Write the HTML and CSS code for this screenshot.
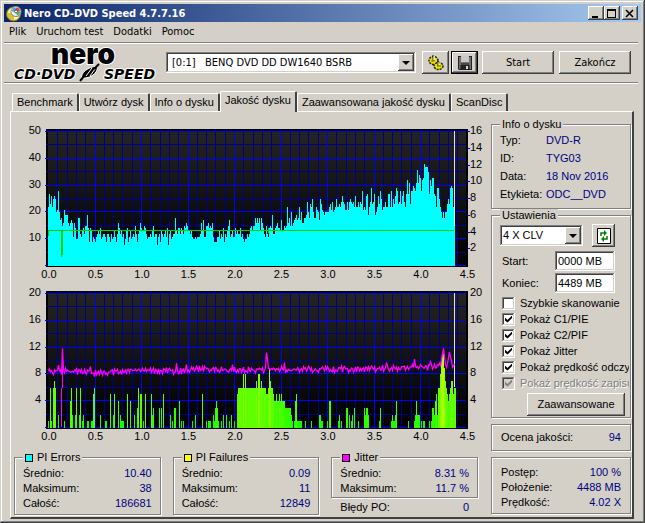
FILE: index.html
```html
<!DOCTYPE html>
<html lang="pl">
  <head>
    <meta charset="UTF-8" />
    <meta name="viewport" content="width=device-width, initial-scale=1.0" />
    <title>Nero CD-DVD Speed 4.7.7.16</title>
    <link rel="stylesheet" href="styles.css">
  </head>

  <body>
    <div class="window">
      <header class="titlebar">
        <svg class="app-icon" width="17" height="17" viewBox="0 0 17 17">
          <circle cx="7.5" cy="9" r="7" fill="#d8c038" stroke="#8a7818" />
          <path d="M2 8a6 6 0 0 1 4-5l1 5zM13 12a6 6 0 0 1-5 3l0-4z" fill="#fff3a0" />
          <circle cx="10" cy="6.5" r="5" fill="#eef2f4" stroke="#7a8a98" />
          <path d="M10 6.500V2.500a4 4 0 0 1 4 4z" fill="#e04a30" />
          <path d="M10 6.500H6a4 4 0 0 1 4-4z" fill="#5b9ad8" />
          <path d="M10 6.500l4 0a4 4 0 0 1-3 4z" fill="#58a868" />
          <circle cx="10" cy="6.500" r="1.500" fill="#fff" stroke="#456" />
        </svg>
        <h1>Nero CD-DVD Speed 4.7.7.16</h1>
        <div class="window-buttons">
          <button class="btn" aria-label="Minimalizuj"><svg width="10" height="9" viewBox="0 0 10 9"><path d="M1 7h6v2H1z" /></svg></button>
          <button class="btn" aria-label="Maksymalizuj"><svg width="10" height="9" viewBox="0 0 10 9"><path d="M0 0h9v9H0zM1 2v6h7V2z" fill-rule="evenodd" /></svg></button>
          <button class="btn close" aria-label="Zamknij"><svg width="10" height="9" viewBox="0 0 10 9"><path d="M1 1l7 7M8 1L1 8" stroke="#000" stroke-width="1.600" /></svg></button>
        </div>
      </header>

      <nav class="menu">
        <a href="#">Plik</a>
        <a href="#">Uruchom test</a>
        <a href="#">Dodatki</a>
        <a href="#">Pomoc</a>
      </nav>

      <div class="toolbar">
        <svg class="logo" width="150" height="36" viewBox="0 0 150 36">
          <text class="logo-nero" x="38" y="19">nero</text>
          <text class="logo-speed" x="1" y="34">CD·DVD</text>
          <text class="logo-speed" x="91" y="34">SPEED</text>
          <path d="M69 33c-2-5 6-11 15-12 2 4-4 13-15 12z" fill="#000" stroke="#fff" />
          <path d="M73 31l6-8M77 31l5-7" stroke="#fff" />
          <path d="M67 36l5-6M81 24l5-5" stroke="#000" stroke-width="2" />
        </svg>
        <div class="select drive">
          <select aria-label="Napęd">
            <option>[0:1]&nbsp;&nbsp; BENQ DVD DD DW1640 BSRB</option>
          </select>
          <span class="arrow"></span>
        </div>
        <div class="tools">
          <button class="btn tool" aria-label="Opcje">
            <svg width="18" height="18" viewBox="0 0 18 18">
              <ellipse cx="6.5" cy="6.5" rx="4.500" ry="4" fill="#e8e000" stroke="#222" stroke-dasharray="2 1" stroke-width="1.500" />
              <ellipse cx="11.5" cy="12" rx="4.500" ry="3.500" fill="#e8e000" stroke="#222" stroke-dasharray="2 1" stroke-width="1.500" />
              <path d="M6 1v6M11 7v5" stroke="#222" />
              <path d="M7 2v4M12 8v3" stroke="#fff" />
              <path d="M4 7h4M10 12h4" stroke="#777700" />
            </svg>
          </button>
          <button class="btn tool save" aria-label="Zapisz">
            <svg width="14" height="14" viewBox="0 0 14 14">
              <path d="M0 0h14v14H1l-1-1z" fill="#222" />
              <path d="M1 1h12v12H1z" fill="#707070" />
              <path d="M3 0h8v7H3z" fill="#c8c8c8" />
              <path d="M3 7h8M3 9h8v5H3z" fill="#222" stroke="#222" />
              <path d="M8 10h2v3H8z" fill="#d8d8d8" />
            </svg>
          </button>
        </div>
        <button class="btn wide">Start</button>
        <button class="btn wide">Zakończ</button>
      </div>

      <div class="tabs">
        <button class="tab">Benchmark</button>
        <button class="tab">Utwórz dysk</button>
        <button class="tab">Info o dysku</button>
        <button class="tab active">Jakość dysku</button>
        <button class="tab">Zaawansowana jakość dysku</button>
        <button class="tab">ScanDisc</button>
      </div>

      <main class="panel">
        <section class="results">
          <svg class="chart" id="pieChart" viewBox="0 0 472 162"></svg>
          <svg class="chart" id="pifChart" viewBox="0 0 472 162"></svg>

          <div class="stats">
            <fieldset class="group">
              <legend><i class="swatch cyan"></i>PI Errors</legend>
              <dl>
                <dt>Średnio:</dt><dd>10.40</dd>
                <dt>Maksimum:</dt><dd>38</dd>
                <dt>Całość:</dt><dd>186681</dd>
              </dl>
            </fieldset>
            <fieldset class="group">
              <legend><i class="swatch yellow"></i>PI Failures</legend>
              <dl>
                <dt>Średnio:</dt><dd>0.09</dd>
                <dt>Maksimum:</dt><dd>11</dd>
                <dt>Całość:</dt><dd>12849</dd>
              </dl>
            </fieldset>
            <div class="jitter">
              <fieldset class="group">
                <legend><i class="swatch magenta"></i>Jitter</legend>
                <dl>
                  <dt>Średnio:</dt><dd>8.31 %</dd>
                  <dt>Maksimum:</dt><dd>11.7 %</dd>
                </dl>
              </fieldset>
              <dl class="po">
                <dt>Błędy PO:</dt><dd>0</dd>
              </dl>
            </div>
          </div>
        </section>

        <aside class="side">
          <fieldset class="group info">
            <legend>Info o dysku</legend>
            <dl>
              <dt>Typ:</dt><dd>DVD-R</dd>
              <dt>ID:</dt><dd>TYG03</dd>
              <dt>Data:</dt><dd>18 Nov 2016</dd>
              <dt>Etykieta:</dt><dd>ODC__DVD</dd>
            </dl>
          </fieldset>

          <fieldset class="group settings">
            <legend>Ustawienia</legend>
            <div class="speed">
              <div class="select">
                <select aria-label="Prędkość">
                  <option>4 X CLV</option>
                </select>
                <span class="arrow"></span>
              </div>
              <button class="btn refresh" aria-label="Odśwież">
                <svg width="14" height="16" viewBox="0 0 14 16">
                  <path d="M.5.5h13v15H.5z" fill="#fff" stroke="#000" />
                  <path d="M4 8V5h4M10 8v3H6" fill="none" stroke="#008000" stroke-width="1.500" />
                  <path d="M7 2l3 3-3 3zM7 8l-3 3 3 3z" fill="#008000" />
                </svg>
              </button>
            </div>
            <div class="field">
              <label for="start">Start:</label>
              <input type="text" id="start" value="0000 MB" />
            </div>
            <div class="field">
              <label for="end">Koniec:</label>
              <input type="text" id="end" value="4489 MB" />
            </div>
            <div class="checks">
              <label><input type="checkbox" />Szybkie skanowanie</label>
              <label><input type="checkbox" checked />Pokaż C1/PIE</label>
              <label><input type="checkbox" checked />Pokaż C2/PIF</label>
              <label><input type="checkbox" checked />Pokaż Jitter</label>
              <label><input type="checkbox" checked />Pokaż prędkość odczy</label>
              <label class="off"><input type="checkbox" checked disabled />Pokaż prędkość zapisu</label>
            </div>
            <button class="btn advanced">Zaawansowane</button>
          </fieldset>

          <div class="group score">
            <dl>
              <dt>Ocena jakości:</dt><dd>94</dd>
            </dl>
          </div>

          <div class="group progress">
            <dl>
              <dt>Postęp:</dt><dd>100 %</dd>
              <dt>Położenie:</dt><dd>4488 MB</dd>
              <dt>Prędkość:</dt><dd>4.02 X</dd>
            </dl>
          </div>
        </aside>
      </main>
    </div>

    <script src="charts.js"></script>
  </body>
</html>
```

FILE: styles.css
```css
* {
  margin: 0;
  padding: 0;
  box-sizing: border-box;
}

body {
  background-color: #d4d0c8;
  color: #000;
  font-family: "Liberation Sans", Arial, sans-serif;
  font-size: 11px;
  line-height: 13px;
}

button, input, select {
  font: inherit;
  color: inherit;
}

.window {
  display: flex;
  flex-direction: column;
  min-height: 100vh;
  padding: 4px;
  box-shadow: inset -1px -1px #404040, inset 1px 1px #d4d0c8, inset -2px -2px #808080, inset 2px 2px #fff;
}

/* Title bar */
.titlebar {
  display: flex;
  align-items: center;
  height: 18px;
  padding: 0 3px 0 2px;
  background: linear-gradient(to right, #0a246a, #a6caf0);
  color: #fff;
}

.titlebar h1 {
  flex: 1;
  padding-left: 1px;
  font: bold 11px "DejaVu Sans Condensed", "DejaVu Sans", sans-serif;
}

.window-buttons {
  display: flex;
}

.window-buttons .btn {
  width: 16px;
  height: 14px;
}

.window-buttons .close {
  margin-left: 2px;
}

.btn {
  display: flex;
  align-items: center;
  justify-content: center;
  border: none;
  background-color: #d4d0c8;
  box-shadow: inset -1px -1px #404040, inset 1px 1px #fff, inset -2px -2px #808080;
}

/* Menu */
.menu {
  display: flex;
  gap: 10px;
  height: 20px;
  padding: 0 5px;
}

.menu a {
  color: #000;
  text-decoration: none;
  line-height: 20px;
}

.menu, .toolbar {
  font-family: "DejaVu Sans Condensed", "DejaVu Sans", sans-serif;
}

/* Toolbar */
.toolbar {
  display: flex;
  align-items: center;
  height: 41px;
  margin-right: 3px;
  padding: 0 7px 0 9px;
  border: solid #808080;
  border-width: 1px 0;
  box-shadow: inset 0 1px #fff, 0 1px #fff;
}

.logo {
  overflow: visible;
}

.logo-nero, .logo-speed {
  stroke: #fff;
  stroke-width: 2px;
  paint-order: stroke;
}

.logo-nero {
  font-family: Inter, sans-serif;
  font-size: 28px;
  font-weight: 900;
}

.logo-speed {
  font-family: "DejaVu Sans", sans-serif;
  font-size: 14px;
  font-style: italic;
  font-weight: bold;
}

.select {
  display: flex;
  padding: 2px;
  background-color: #fff;
  box-shadow: inset -1px -1px #fff, inset 1px 1px #808080, inset -2px -2px #d4d0c8, inset 2px 2px #404040;
}

.select select {
  flex: 1;
  min-width: 0;
  padding-left: 4px;
  border: none;
  background: none;
  appearance: none;
}

.arrow {
  display: flex;
  align-items: center;
  justify-content: center;
  width: 16px;
  background-color: #d4d0c8;
  box-shadow: inset -1px -1px #404040, inset 1px 1px #fff, inset -2px -2px #808080;
}

.arrow::before {
  content: "";
  border: 4px solid transparent;
  border-top-color: #000;
  border-bottom: none;
}

.drive {
  flex: 1;
  height: 21px;
  margin: 0 6px 0 3px;
}

.tools {
  display: flex;
  gap: 2px;
}

.tool {
  width: 27px;
  height: 23px;
}

.save {
  border: 1px solid #000;
}

.wide {
  width: 72px;
  height: 23px;
  margin-left: 5px;
}

.tools + .wide {
  margin-left: 4px;
}

/* Tabs */
.tabs {
  display: flex;
  align-items: flex-end;
  height: 28px;
  padding-left: 8px;
}

.tab {
  height: 18px;
  padding: 0 4px;
  border: 1px solid #fff;
  border-right: 2px solid #404040;
  border-bottom: none;
  border-radius: 2px 2px 0 0;
  background-color: #d4d0c8;
  white-space: nowrap;
}

.tab.active {
  position: relative;
  height: 21px;
  margin-bottom: -1px;
  padding-bottom: 3px;
}

.panel {
  display: grid;
  grid-template-columns: 1fr 140px;
  gap: 5px;
  flex: 1;
  margin: 0 7px 0 6px;
  padding: 6px 1px 2px 3px;
  border: 1px solid #fff;
  border-right: 2px solid #404040;
  border-bottom: 2px solid #404040;
}

/* Charts */
.results {
  padding-top: 3px;
}

.chart {
  display: block;
  width: 100%;
}

.chart text {
  font-size: 11px;
}

/* Group boxes */
.group {
  min-width: 0;
  padding: 0 8px;
  border: 1px solid #808080;
  box-shadow: 1px 1px #fff, inset 1px 1px #fff;
}

legend {
  display: flex;
  align-items: center;
  padding: 0 2px;
  background-color: #d4d0c8;
}

dl {
  display: grid;
  grid-template-columns: auto 1fr;
}

dd {
  color: #000080;
  text-align: right;
}

.stats {
  display: grid;
  grid-template-columns: repeat(3, 1fr);
  gap: 12px;
  padding: 6px 8px 0 0;
}

.stats dl {
  line-height: 15px;
}

.stats .group {
  padding: 2px 8px 1px;
}

.swatch {
  width: 8px;
  height: 8px;
  margin-right: 4px;
  border: 1px solid #000;
}

.cyan {
  background-color: #00ffff;
}

.yellow {
  background-color: #ffff00;
}

.magenta {
  background-color: #ff00ff;
}

.po {
  padding: 2px 9px 0;
}

/* Right column */
.side {
  min-width: 0;
}

.info {
  padding-bottom: 5px;
}

.info dl {
  grid-template-columns: 46px 1fr;
  line-height: 18px;
}

.info dd {
  text-align: left;
}

.settings {
  padding: 2px 5px 1px 8px;
}

.speed, .field {
  display: flex;
  align-items: center;
  justify-content: space-between;
  margin-right: 10px;
}

.speed {
  margin-bottom: 3px;
}

.speed .select {
  width: 83px;
  height: 21px;
}

.speed .select select {
  padding-left: 1px;
}

.refresh {
  width: 23px;
  height: 23px;
}

.field {
  height: 22px;
  padding-left: 2px;
}

.field input {
  width: 60px;
  height: 20px;
  padding: 0 3px;
  border: none;
  background-color: #fff;
  box-shadow: inset -1px -1px #fff, inset 1px 1px #808080, inset -2px -2px #d4d0c8, inset 2px 2px #404040;
}

.checks {
  padding: 1px 0 0 2px;
  margin-right: -4px;
  overflow: hidden;
}

.checks label {
  display: flex;
  align-items: center;
  gap: 5px;
  height: 16px;
  white-space: nowrap;
}

.checks input {
  display: grid;
  flex: none;
  place-content: center;
  width: 13px;
  height: 13px;
  appearance: none;
  background-color: #fff;
  box-shadow: inset -1px -1px #fff, inset 1px 1px #808080, inset -2px -2px #d4d0c8, inset 2px 2px #404040;
}

.checks input:checked::before {
  content: "";
  width: 7px;
  height: 7px;
  background-color: #000;
  clip-path: polygon(0 30%, 35% 65%, 100% 0, 100% 40%, 35% 100%, 0 70%);
}

.checks input:disabled {
  background-color: #d4d0c8;
}

.checks input:disabled::before {
  background-color: #808080;
}

.off {
  color: #808080;
  text-shadow: 1px 1px #fff;
}

.advanced {
  width: 98px;
  height: 23px;
  margin: 2px 0 0 auto;
}

.score, .progress {
  margin-top: 6px;
}

.score {
  padding: 6px 9px;
}

.progress {
  padding: 7px 9px 3px;
}

.progress dl {
  line-height: 15px;
}
```

FILE: charts.js
```js
const SVG_NS = "http://www.w3.org/2000/svg";

// Plot area inside each chart
const LEFT = 34;
const TOP = 10;
const BOTTOM = 144;
const GB = 93; // width of 1 GB
const END = 441; // last scanned position

// PI errors, one value per column
const pie = [
  22, 27, 23, 26, 22, 25, 26, 25, 20, 21, 28, 20, 17, 18, 15, 16, 21, 19, 19, 19,
  16, 15, 16, 17, 16, 11, 16, 14, 10, 10, 18, 18, 12, 11, 13, 14, 12, 15, 15, 19,
  14, 9, 14, 13, 9, 11, 10, 9, 11, 12, 13, 12, 14, 10, 11, 12, 12, 11, 9, 12,
  12, 11, 9, 12, 10, 11, 13, 11, 9, 12, 16, 14, 12, 13, 11, 12, 8, 10, 13, 14,
  9, 11, 13, 10, 11, 12, 11, 15, 12, 9, 12, 13, 16, 14, 13, 13, 15, 14, 12, 10,
  11, 11, 12, 11, 13, 15, 11, 12, 12, 8, 11, 12, 9, 13, 12, 11, 12, 13, 11, 14,
  8, 12, 13, 10, 11, 12, 12, 18, 13, 12, 14, 14, 12, 14, 13, 12, 15, 14, 16, 15,
  13, 13, 12, 13, 11, 10, 10, 11, 10, 11, 11, 11, 12, 16, 13, 17, 11, 11, 15, 15,
  16, 14, 15, 14, 16, 11, 9, 9, 9, 11, 11, 13, 10, 12, 11, 14, 9, 12, 11, 13,
  15, 17, 11, 12, 13, 11, 11, 14, 12, 13, 12, 12, 14, 11, 12, 10, 9, 10, 10, 12,
  11, 12, 14, 15, 13, 15, 15, 18, 16, 18, 16, 18, 13, 18, 16, 14, 12, 11, 15, 12,
  11, 14, 15, 14, 19, 12, 12, 14, 15, 16, 14, 14, 13, 17, 13, 13, 15, 14, 15, 22,
  16, 18, 15, 20, 15, 16, 17, 18, 19, 17, 18, 22, 17, 20, 16, 16, 18, 18, 19, 24,
  20, 18, 23, 22, 25, 20, 18, 18, 22, 21, 20, 17, 25, 23, 21, 20, 19, 20, 20, 20,
  20, 22, 23, 21, 24, 20, 21, 22, 25, 22, 22, 23, 22, 24, 26, 24, 23, 21, 21, 24,
  21, 24, 25, 24, 23, 24, 22, 26, 22, 22, 24, 22, 24, 23, 28, 21, 22, 21, 26, 27,
  19, 22, 24, 29, 23, 24, 27, 19, 20, 22, 26, 23, 28, 25, 21, 22, 22, 24, 22, 22,
  27, 27, 22, 28, 22, 25, 23, 26, 29, 28, 23, 24, 28, 23, 26, 28, 24, 22, 27, 32,
  27, 31, 23, 28, 28, 30, 29, 28, 31, 36, 31, 34, 33, 28, 32, 33, 38, 37, 37, 37,
  35, 27, 32, 30, 33, 33, 27, 26, 22, 29, 29, 25, 22, 20, 18, 20, 18, 20, 20, 23,
  25, 23, 29, 30, 29, 22, 26
];

// PI failures as [column, value]
const pif = [
  [0, 1], [2, 6], [3, 1], [5, 6], [6, 7], [7, 6], [10, 2], [16, 1], [22, 4], [23, 6],
  [24, 2], [27, 2], [28, 6], [31, 2], [32, 6], [34, 1], [35, 2], [39, 1], [40, 1],
  [43, 1], [44, 1], [45, 5], [46, 6], [52, 2], [57, 1], [58, 1], [62, 5], [65, 2],
  [66, 5], [70, 4], [72, 2], [73, 1], [74, 1], [75, 1], [79, 5], [82, 4], [86, 2],
  [89, 3], [90, 6], [92, 5], [93, 5], [95, 1], [97, 5], [103, 5], [104, 2], [105, 3],
  [111, 3], [113, 3], [115, 5], [122, 2], [124, 1], [126, 3], [127, 3], [131, 4],
  [133, 1], [135, 1], [144, 1], [147, 2], [154, 5], [158, 1], [160, 1], [161, 1],
  [162, 1], [165, 2], [166, 1], [167, 3], [168, 4], [169, 3], [170, 1], [173, 1],
  [175, 2], [178, 2], [181, 1], [183, 2], [186, 1], [189, 5], [190, 6], [191, 6],
  [192, 6], [193, 6], [194, 6], [195, 8], [196, 6], [197, 8], [198, 6], [199, 6],
  [200, 6], [201, 6], [202, 6], [203, 6], [204, 6], [205, 6], [206, 6], [207, 6],
  [208, 7], [209, 6], [210, 8], [211, 8], [212, 6], [213, 7], [214, 6], [215, 6],
  [216, 6], [217, 6], [218, 5], [219, 5], [220, 6], [221, 9], [222, 7], [223, 6],
  [224, 6], [225, 5], [226, 4], [227, 4], [228, 5], [229, 4], [230, 4], [231, 5],
  [232, 4], [233, 5], [234, 4], [235, 4], [236, 4], [237, 3], [238, 3], [239, 3],
  [240, 3], [241, 3], [242, 3], [243, 2], [244, 1], [246, 1], [247, 4], [248, 5],
  [249, 1], [250, 1], [251, 1], [252, 1], [253, 1], [257, 1], [263, 1], [271, 2],
  [272, 2], [273, 1], [274, 1], [279, 1], [281, 4], [282, 4], [290, 1], [291, 2],
  [293, 1], [298, 3], [299, 3], [301, 2], [303, 1], [304, 2], [306, 3], [310, 1],
  [316, 3], [317, 2], [318, 3], [319, 3], [320, 2], [331, 1], [332, 3], [343, 1],
  [344, 2], [345, 1], [346, 1], [347, 2], [348, 4], [360, 1], [366, 1], [367, 2],
  [368, 4], [369, 2], [370, 2], [371, 2], [373, 1], [375, 1], [376, 1], [381, 1],
  [383, 1], [384, 3], [385, 3], [386, 2], [387, 4], [388, 5], [389, 2], [390, 6],
  [391, 6], [392, 8], [393, 10], [394, 11], [395, 11], [396, 9], [397, 7], [398, 6],
  [399, 5], [400, 4], [401, 5], [402, 6], [403, 7], [404, 7], [405, 5], [406, 6], [407, 6]
];

// Jitter: trend and peaks as column: value
const jitterTrend = [[0, 8.4], [60, 8.2], [90, 8.6], [130, 8.4], [150, 8.7], [190, 8.6], [310, 8.7], [380, 9], [408, 9.4]];
const jitterPeaks = {
  10: 9.3, 14: 11.8, 42: 9.1, 46: 7.6, 128: 9.6, 138: 9.4, 184: 9.4, 218: 11.2, 219: 10.2,
  236: 9.7, 338: 9.7, 366: 10.2, 382: 9.8, 393: 10.2, 394: 11, 395: 11.8, 396: 10.5,
  400: 10.4, 401: 11.3, 402: 10.5, 403: 10
};

function draw(parent, name, attributes, text) {
  const node = document.createElementNS(SVG_NS, name);
  for (const key in attributes) node.setAttribute(key, attributes[key]);
  if (text !== undefined) node.textContent = text;
  parent.appendChild(node);
}

function rect(svg, x, y, width, height, fill) {
  draw(svg, "rect", { x, y, width, height, fill, "shape-rendering": "crispEdges" });
}

function drawFrame(svg, max, step) {
  const id = svg.id + "Back";
  svg.innerHTML = `<defs><linearGradient id="${id}" x2="0" y2="1"><stop stop-color="#242424"/><stop offset="1" stop-color="#000"/></linearGradient></defs>`;
  rect(svg, 32, 8, 422, 138, "#000");
  rect(svg, LEFT, TOP, 418, 134, `url(#${id})`);

  // minor lines first, so that the major ones stay on top
  for (let i = 0; i <= 45; i++) {
    if (i % 5) rect(svg, LEFT + Math.round(i * GB / 10), TOP, 1, 134, "#00008b");
  }
  for (let v = step / 2; v < max; v += step) {
    rect(svg, 32, Math.round(BOTTOM - v * 134 / max), 420, 1, "#00008b");
  }
  for (let i = 5; i < 45; i += 5) {
    rect(svg, LEFT + Math.round(i * GB / 10), TOP, 1, 134, "#0000ff");
  }
  for (let v = 0; v <= max; v += step) {
    const y = Math.round(BOTTOM - v * 134 / max);
    rect(svg, 31, y, 421, 1, "#0000ff");
    if (v) draw(svg, "text", { x: 27, y: y + 3, "text-anchor": "end" }, v);
  }
  for (let i = 0; i <= 9; i++) {
    draw(svg, "text", { x: 35 + i * GB / 2, y: 157, "text-anchor": "middle" }, (i / 2).toFixed(1));
  }
}

function drawRightAxis(svg, max, step, ticks) {
  for (let v = step; v <= max; v += step) {
    const y = Math.round(BOTTOM - v * 134 / max);
    if (ticks) rect(svg, 453, y, 3, 1, "#0000ff");
    draw(svg, "text", { x: 456, y: y + 3 }, v);
  }
}

function drawPie() {
  const svg = document.getElementById("pieChart");
  drawFrame(svg, 50, 10);
  drawRightAxis(svg, 16, 2, true);
  pie.slice(0, END - LEFT).forEach((v, i) => {
    const height = Math.round(v * 134 / 50);
    rect(svg, LEFT + i, BOTTOM + 1 - height, 1, height, "#00ffff");
  });
  rect(svg, END - 1, TOP, 1, 95, "#e0e0e0");
  // read speed
  rect(svg, LEFT, 109, 406, 1, "#00d000");
  rect(svg, LEFT, 109, 1, 6, "#00d000");
  rect(svg, 47, 109, 1, 27, "#00d000");
  rect(svg, 48, 109, 1, 25, "#00d000");
  rect(svg, 254, 107, 1, 5, "#00d000");
}

function jitterAt(i) {
  if (jitterPeaks[i]) return jitterPeaks[i];
  let k = 1;
  while (jitterTrend[k][0] < i) k++;
  const [x1, y1] = jitterTrend[k - 1];
  const [x2, y2] = jitterTrend[k];
  const noise = Math.sin(i * 2.3) * 0.2 + Math.sin(i * i * 0.7) * 0.3;
  return y1 + (y2 - y1) * (i - x1) / (x2 - x1) + noise;
}

function drawPif() {
  const svg = document.getElementById("pifChart");
  drawFrame(svg, 20, 4);
  drawRightAxis(svg, 20, 4, false);
  pif.forEach(([i, v]) => {
    const height = Math.round(v * 134 / 20);
    rect(svg, LEFT + i, BOTTOM + 1 - height, 1, height, `rgb(${v * 16}, 255, 0)`);
  });
  rect(svg, END - 1, TOP, 1, 94, "#e0e0e0");
  let points = "";
  for (let i = 0; i < END - LEFT; i++) {
    points += `${LEFT + i + 0.5},${(BOTTOM + 0.5 - jitterAt(i) * 134 / 20).toFixed(1)} `;
  }
  draw(svg, "polyline", { points, fill: "none", stroke: "#ff00ff", "stroke-width": 1.3 });
  rect(svg, 47, 105, 1, 39, "#ff00ff");
  rect(svg, 48, 66, 1, 39, "#ff00ff");
}

drawPie();
drawPif();
```
